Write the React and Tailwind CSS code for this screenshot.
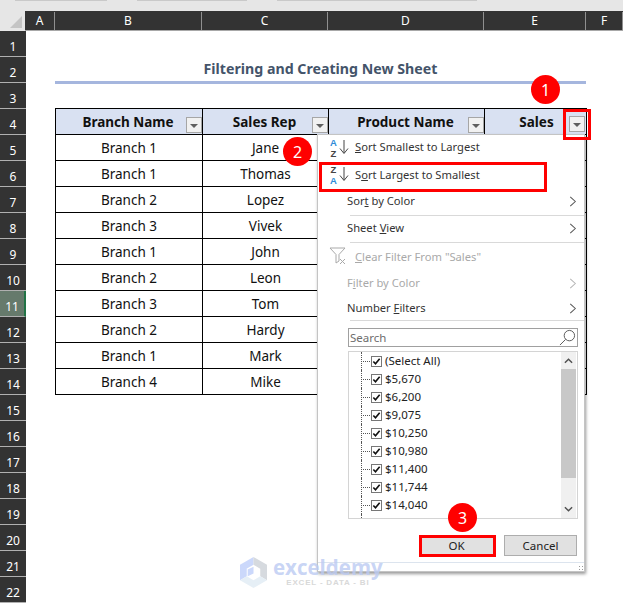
import React from "react";

const columns = [
  { label: "A", width: "w-[30px]" },
  { label: "B", width: "w-[147px]" },
  { label: "C", width: "w-[126px]" },
  { label: "D", width: "w-[156px]" },
  { label: "E", width: "w-[102px]" },
  { label: "F", width: "w-[37px]" },
];

const rowNumbers = Array.from({ length: 22 }, (_, i) => i + 1);

const rows = [
  ["Branch 1", "Jane"],
  ["Branch 1", "Thomas"],
  ["Branch 2", "Lopez"],
  ["Branch 3", "Vivek"],
  ["Branch 1", "John"],
  ["Branch 2", "Leon"],
  ["Branch 3", "Tom"],
  ["Branch 2", "Hardy"],
  ["Branch 1", "Mark"],
  ["Branch 4", "Mike"],
];

const amounts = ["$5,670", "$6,200", "$9,075", "$10,250", "$10,980", "$11,400", "$11,744", "$14,040"];

const FilterButton = ({ className = "" }) => (
  <span className={`flex h-[16px] w-[16px] items-center justify-center border border-[#a6a6a6] bg-[#f1f1f1] ${className}`}>
    <span className="mt-[2px] h-0 w-0 border-x-[4px] border-t-[4px] border-x-transparent border-t-[#5f5f5f]" />
  </span>
);

const Badge = ({ n, className }) => (
  <span className={`absolute flex h-[29px] w-[29px] items-center justify-center rounded-full bg-[#ff0000] font-['Noto_Sans',sans-serif] text-[16px] text-white ${className}`}>
    {n}
  </span>
);

const Chevron = ({ light }) => (
  <svg viewBox="0 0 8 12" className="absolute left-[251px] h-[11px] w-[8px]" fill="none" stroke={light ? "#b5b5b5" : "#555555"} strokeWidth="1.1">
    <path d="M1 1l5.5 5-5.5 5" />
  </svg>
);

const SortIcon = ({ top, bottom }) => (
  <span className="absolute left-[10px] top-1/2 flex h-[24px] w-[26px] -translate-y-1/2 font-['Liberation_Sans',sans-serif] text-[9.5px] leading-[11px] font-bold">
    <span className="flex w-[11px] flex-col items-center justify-center">
      <span className={top === "A" ? "text-[#2e8bd8]" : "text-[#444444]"}>{top}</span>
      <span className={bottom === "A" ? "text-[#2e8bd8]" : "text-[#444444]"}>{bottom}</span>
    </span>
    <svg viewBox="0 0 10 16" className="mt-[3px] h-[16px] w-[10px]" fill="none" stroke="#444444" strokeWidth="1">
      <path d="M5 1v13M1 9.5L5 14.5l4-5" />
    </svg>
  </span>
);

const MenuRow = ({ height, inset, light, chevron, icon, children }) => (
  <div className={`relative flex shrink-0 items-center text-[11.2px] ${height} ${inset} ${light ? "text-[#a9a9a9]" : "text-[#333333]"}`}>
    {icon}
    <span>{children}</span>
    {chevron && <Chevron light={light} />}
  </div>
);

const Separator = () => <div className="ml-[32px] h-px shrink-0 bg-[#d9d9d9]" />;

const TreeRow = ({ label, last }) => (
  <div className="relative flex h-[18px] shrink-0 items-center pl-[22px]">
    <span className={`absolute left-[12px] top-0 border-l border-dotted border-[#555555] ${last ? "h-[9px]" : "h-[18px]"}`} />
    <span className="absolute left-[12px] top-[9px] w-[9px] border-t border-dotted border-[#555555]" />
    <span className="flex h-[11px] w-[11px] items-center justify-center border border-[#777777] bg-white">
      <svg viewBox="0 0 10 10" className="h-[9px] w-[9px]" fill="none" stroke="#111111" strokeWidth="1.8">
        <path d="M1.5 5l2.4 2.6L8.5 2" />
      </svg>
    </span>
    {label && <span className="ml-[3px] text-[#222222]">{label}</span>}
  </div>
);

const FilterPopup = () => (
  <div className="absolute left-[317px] top-[134px] flex h-[438px] w-[268px] flex-col border border-[#c4c4c4] bg-white font-['Noto_Sans',sans-serif] text-[11.5px] shadow-[1px_2px_3px_rgba(0,0,0,0.4)]">
    <MenuRow height="h-[25px]" inset="pl-[37px]" icon={<SortIcon top="A" bottom="Z" />}>
      <u>S</u>ort Smallest to Largest
    </MenuRow>
    <MenuRow height="h-[30px]" inset="pl-[37px]" icon={<SortIcon top="Z" bottom="A" />}>
      S<u>o</u>rt Largest to Smallest
    </MenuRow>
    <MenuRow height="h-[25px]" inset="pl-[29px] pb-[2px]" chevron>
      Sor<u>t</u> by Color
    </MenuRow>
    <Separator />
    <MenuRow height="h-[26px]" inset="pl-[29px] pb-[1px]" chevron>
      Sheet <u>V</u>iew
    </MenuRow>
    <Separator />
    <MenuRow
      height="h-[28px]"
      inset="pl-[37px]"
      light
      icon={
        <svg viewBox="0 0 18 18" className="absolute left-[11px] top-[4px] h-[18px] w-[18px]" fill="none" stroke="#a9a9a9" strokeWidth="1">
          <path d="M1 1h15l-6 6.5V14l-3 2V7.5z" />
          <path d="M11 12l5 5M16 12l-5 5" />
        </svg>
      }
    >
      <u>C</u>lear Filter From "Sales"
    </MenuRow>
    <MenuRow height="h-[25px]" inset="pl-[29px] pb-[1px]" light chevron>
      F<u>i</u>lter by Color
    </MenuRow>
    <MenuRow height="h-[24px]" inset="pl-[29px]" chevron>
      Number <u>F</u>ilters
    </MenuRow>
    <Separator />

    <div className="ml-[30px] mt-[7px] flex h-[19px] w-[230px] shrink-0 items-center justify-between border border-[#a0a0a0] pl-[1px] pr-[1px] text-[#6d6d6d]">
      <span>Search</span>
      <svg viewBox="0 0 18 18" className="h-[17px] w-[17px]" fill="none" stroke="#555555" strokeWidth="1">
        <circle cx="11" cy="7" r="5.5" />
        <path d="M7 11l-6 6" />
      </svg>
    </div>

    <div className="relative ml-[30px] mt-[4px] flex h-[168px] w-[230px] shrink-0 flex-col overflow-hidden border border-[#d4d4d4] pr-[17px]">
      <TreeRow label="(Select All)" />
      {amounts.map((amount) => (
        <TreeRow key={amount} label={amount} />
      ))}
      <TreeRow />
      <div className="absolute right-[1px] top-0 flex h-full w-[15px] flex-col bg-[#f0f0f0]">
        <div className="flex h-[17px] shrink-0 items-center justify-center">
          <svg viewBox="0 0 10 6" className="h-[6px] w-[9px]" fill="none" stroke="#505050" strokeWidth="1.6">
            <path d="M1 5l4-4 4 4" />
          </svg>
        </div>
        <div className="h-[109px] shrink-0 bg-[#c8c8c8]" />
        <div className="flex flex-1 items-end justify-center pb-[6px]">
          <svg viewBox="0 0 10 6" className="h-[6px] w-[9px]" fill="none" stroke="#505050" strokeWidth="1.6">
            <path d="M1 1l4 4 4-4" />
          </svg>
        </div>
      </div>
    </div>

    <div className="mt-[16px] flex h-[21px] shrink-0 justify-end gap-[9px] pr-[7px] text-[#222222]">
      <button className="h-[21px] w-[75px] border-r-[2px] border-[#2b7fd4] bg-[#e1e1e1]">OK</button>
      <button className="h-[21px] w-[73px] border border-[#adadad] bg-[#e1e1e1]">Cancel</button>
    </div>

    <div className="relative mt-[6px] flex-1 border-t border-[#dce4ee]">
      <span className="absolute bottom-[1px] right-[1px] h-[5px] w-[5px] bg-[radial-gradient(#999999_1px,transparent_1px)] bg-[length:3px_3px]" />
    </div>
  </div>
);

const Watermark = () => (
  <div className="pointer-events-none absolute left-[240px] top-[556px] flex items-center gap-[6px] opacity-90">
    <svg viewBox="0 0 28 32" className="h-[31px] w-[27px]">
      <path d="M14 0L0 8v8l14-8z" fill="#c6d4fb" />
      <path d="M0 8v16l7-4v-8z" fill="#c6d4fb" />
      <path d="M14 0l14 8v16l-7-4v-8l-7-4z" fill="#d2d6dc" />
      <path d="M0 24l14 8 14-8-7-4-7 4-7-4z" fill="#e4eef6" />
      <path d="M14 10l6 3v7l-6-3z" fill="#ffffff" />
      <path d="M8 13l6-3v7l-6 3z" fill="#c6d4fb" />
    </svg>
    <div className="flex flex-col items-center">
      <span className="font-['Open_Sans',sans-serif] text-[20.5px] leading-[22px] font-bold text-[#bccbf3]/90">exceldemy</span>
      <span className="font-['Liberation_Sans',sans-serif] text-[8px] leading-[10px] font-bold tracking-[0.8px] text-[#d5d5d5]">EXCEL - DATA - BI</span>
    </div>
  </div>
);

export default function App() {
  return (
    <div className="relative h-[603px] w-[623px] overflow-hidden bg-white font-['Noto_Sans',sans-serif]">
      {/* ribbon leftover */}
      <div className="flex h-[11px] gap-[30px] bg-[#e6e6e6]">
        <span className="ml-[15px] h-px w-[92px] bg-[#c9c9c9]" />
        <span className="h-px w-[110px] bg-[#c9c9c9]" />
        <span className="h-px w-[200px] bg-[#c9c9c9]" />
      </div>

      {/* column letters */}
      <div className="flex h-[20px]">
        <div className="relative w-[25px] shrink-0 overflow-hidden bg-[#e6e6e6]">
          <span className="absolute bottom-[3px] right-[3px] h-0 w-0 border-b-[12px] border-l-[12px] border-b-[#c4c4c4] border-l-transparent" />
        </div>
        <div className="flex flex-1 border-b border-[#a8a8a8] bg-[#333333] pt-[1px] text-[12px] text-white">
          {columns.map((col) => (
            <div key={col.label} className={`flex shrink-0 items-center justify-center border-r border-[#8f8f8f] ${col.width}`}>
              {col.label}
            </div>
          ))}
        </div>
      </div>

      <div className="flex">
        {/* row numbers */}
        <div className="flex w-[26px] shrink-0 flex-col bg-[#333333] text-[12px] text-white">
          {rowNumbers.map((n) => (
            <div
              key={n}
              className={`flex h-[26px] shrink-0 items-center justify-center border-b border-[#b0b0b0] pt-[6px] ${n === 11 ? "border-r-2 border-r-[#217346] bg-[#667a6c]" : ""}`}
            >
              {n}
            </div>
          ))}
        </div>

        {/* sheet */}
        <div className="flex-1 pl-[29px]">
          <div className="mt-[21px] mb-[24px] flex h-[32px] w-[531px] items-end justify-center border-b-[3px] border-[#a5b6de] pb-[2px] text-[14.2px] font-bold text-[#44546a]">
            Filtering and Creating New Sheet
          </div>
          <table className="w-[531px] table-fixed border-collapse text-[13.5px] text-[#111111]">
            <colgroup>
              <col className="w-[147px]" />
              <col className="w-[126px]" />
              <col className="w-[156px]" />
              <col className="w-[102px]" />
            </colgroup>
            <thead>
              <tr className="h-[26px] bg-[#d9e1f2]">
                <th className="relative border border-black pr-[2px] pt-[2px]">
                  Branch Name
                  <FilterButton className="absolute right-0 top-[8px]" />
                </th>
                <th className="relative border border-black pr-[2px] pt-[2px]">
                  Sales Rep
                  <FilterButton className="absolute right-0 top-[8px]" />
                </th>
                <th className="relative border border-black pr-[2px] pt-[2px]">
                  Product Name
                  <FilterButton className="absolute right-0 top-[8px]" />
                </th>
                <th className="relative border border-black pl-[2px] pt-[2px]">
                  Sales
                  <FilterButton className="absolute right-[1px] top-[7px]" />
                </th>
              </tr>
            </thead>
            <tbody>
              {rows.map(([branch, rep]) => (
                <tr key={branch + rep} className="h-[26px] text-center">
                  <td className="border border-black pt-[2px]">{branch}</td>
                  <td className="border border-black pt-[2px]">{rep}</td>
                  <td className="border border-black" />
                  <td className="border border-black" />
                </tr>
              ))}
            </tbody>
          </table>
        </div>
      </div>

      <FilterPopup />

      {/* red callouts */}
      <span className="absolute left-[563px] top-[109px] h-[31px] w-[28px] border-[3px] border-[#ff0000]" />
      <span className="absolute left-[319px] top-[162px] h-[30px] w-[228px] border-[3px] border-[#ff0000]" />
      <span className="absolute left-[419px] top-[535px] h-[22px] w-[77px] border-[3px] border-[#ff0000]" />
      <Badge n="1" className="left-[531px] top-[75px]" />
      <Badge n="2" className="left-[283px] top-[137px]" />
      <Badge n="3" className="left-[448px] top-[503px]" />

      <Watermark />
    </div>
  );
}
